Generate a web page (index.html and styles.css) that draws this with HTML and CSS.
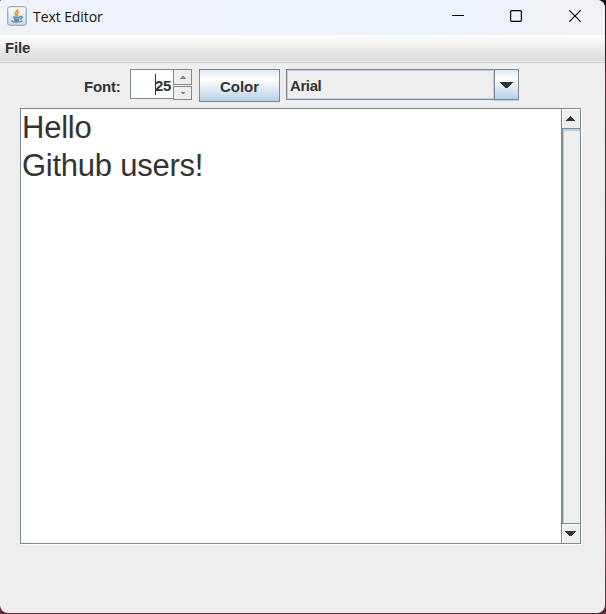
FILE: index.html
```html
<!DOCTYPE html>
<html lang="en">
<head>
<meta charset="utf-8">
<title>Text Editor</title>
<link rel="stylesheet" href="styles.css">
</head>
<body>
<div class="window">
  <header class="titlebar">
    <svg class="app-icon" width="20" height="20" viewBox="0 0 20 20" fill="none">
      <defs><linearGradient id="tile" x1="0" y1="0" x2="0" y2="1"><stop offset="0" stop-color="#fdfeff"/><stop offset="1" stop-color="#cfdbe5"/></linearGradient></defs>
      <rect x=".75" y=".75" width="18.5" height="18.5" rx="2" fill="url(#tile)" stroke="#8299ad"/>
      <path d="M10.8 3c.6 2-3.600 2.700-2.800 4.700.2.700 1 1.300 1.400 2.100M12.300 5.800c-2.400 1-2.800 1.800-1.800 2.800.4.500.2 1-.2 1.400" stroke="#ef8a35" stroke-width="1.500"/>
      <path d="M6 10.600c1.500.9 6 .8 7.500 0M6.800 12.400c1.800.8 4.300.7 5.800.1M7.200 14c1.500.6 3.600.6 5 0M13.300 10.500c2.700-.5 2.400 2-.3 2.800M5.500 14.600c-3 1.200 6 2.500 10 .1" stroke="#55809f" stroke-width="1.300"/>
    </svg>
    <span class="title">Text Editor</span>
    <div class="controls">
      <svg width="12" height="12" viewBox="0 0 12 12"><path d="M0 5.500h12" stroke="#000"/></svg>
      <svg width="12" height="12" viewBox="0 0 12 12"><rect x=".6" y=".6" width="10.800" height="10.800" rx="1.200" fill="none" stroke="#000" stroke-width="1.200"/></svg>
      <svg class="close" width="12" height="12" viewBox="0 0 12 12"><path d="M.3.3l11.400 11.400M11.700.3L.3 11.700" stroke="#000" stroke-width="1.100"/></svg>
    </div>
  </header>
  <nav class="menubar"><span>File</span></nav>
  <div class="toolbar">
    <span class="label">Font:</span>
    <div class="spinner">
      <div class="field"><span class="caret"></span>25</div>
      <div class="steps">
        <div class="step"><svg width="6" height="3" viewBox="0 0 6 3"><path d="M2 0h2v1h1v1h1v1H0V2h1V1h1z"/></svg></div>
        <div class="step"><svg width="4" height="2" viewBox="0 0 4 2"><path d="M0 0h4v1H3v1H1V1H0z"/></svg></div>
      </div>
    </div>
    <div class="button">Color</div>
    <div class="combo">
      <div class="value">Arial</div>
      <div class="drop"><svg width="13" height="6" viewBox="0 0 13 6"><path d="M0 0h13v1h-1v1h-1v1h-1v1H9v1H8v1H5V5H4V4H3V3H2V2H1V1H0z"/></svg></div>
    </div>
  </div>
  <main class="editor">
    <div class="text">Hello<br>Github users!</div>
    <div class="scrollbar">
      <div class="arrow up"><svg width="9" height="5" viewBox="0 0 9 5"><path d="M4 0h1v1h1v1h1v1h1v1h1v1H0V4h1V3h1V2h1V1h1z"/></svg></div>
      <div class="thumb"></div>
      <div class="arrow down"><svg width="11" height="5" viewBox="0 0 11 5"><path d="M0 0h11v1h-1v1H9v1H8v1H7v1H4V4H3V3H2V2H1V1H0z"/></svg></div>
    </div>
  </main>
</div>
</body>
</html>
```
FILE: styles.css
```css
* { box-sizing: border-box; }
svg { display: block; flex: none; }
body {
  margin: 0;
  width: 606px;
  height: 614px;
  overflow: hidden;
  background: linear-gradient(#111 0, #222 50px, #6d2431 80px, #34343e 110px, #292b35 500px, #a83d4a 540px, #5e2637 614px);
  font: bold 15px "Liberation Sans", Arial, sans-serif;
  letter-spacing: -0.2px;
  color: #333;
}
.window {
  width: 605px;
  height: 613px;
  overflow: hidden;
  border-radius: 2px 8px 8px 8px;
  background: #eee;
}
.titlebar {
  display: flex;
  align-items: center;
  height: 35px;
  padding: 0 24px 4px 7px;
  background: linear-gradient(90deg, #eff3f9, #ebf3fb 75%, #f3f1f6);
}
.title {
  margin-left: 6px;
  padding-top: 2px;
  font: 14px/20px "Open Sans", "Noto Sans", sans-serif;
  letter-spacing: -0.08px;
  color: #111;
}
.controls { display: flex; gap: 46px; margin-left: auto; }
.close { margin-left: 1px; }
.menubar {
  height: 28px;
  padding: 0 5px;
  border-bottom: 1px solid #ccc;
  background: linear-gradient(#fff, #dadada 26px, #eee 26px);
  line-height: 26px;
}
.toolbar { display: flex; align-items: flex-start; height: 45px; padding: 6px 0 0 84px; }
.label { width: 46px; line-height: 35px; }
.spinner { display: flex; width: 62px; height: 31px; margin-right: 7px; }
.field {
  display: flex;
  justify-content: flex-end;
  align-items: center;
  width: 43px;
  height: 30px;
  padding: 3px 2px 0 0;
  border: solid #7a8a99;
  border-width: 1px 0 1px 1px;
  background: #fff;
  letter-spacing: -0.4px;
}
.caret { width: 1px; height: 21px; margin: -3px -1px 0 0; background: #333; }
.steps { display: flex; flex-direction: column; gap: 1px; width: 19px; }
.step { display: grid; place-items: center; height: 16px; border: 1px solid #7a8a99; fill: #7a8a99; }
.step:last-child { height: 14px; }
.button {
  width: 81px;
  height: 33px;
  margin-right: 6px;
  border: 1px solid #7a8a99;
  background: linear-gradient(#dde8f3, #fff 30%, #b8cfe5);
  text-align: center;
  letter-spacing: 0;
  line-height: 34px;
}
.combo { display: flex; width: 233px; height: 31px; }
.value {
  flex: 1;
  padding-left: 3px;
  border: 1px solid #7a8a99;
  border-right: 0;
  box-shadow: inset 1px 1px #b8cfe5, inset -1px -1px #b8cfe5;
  letter-spacing: -0.4px;
  line-height: 31px;
}
.drop {
  display: grid;
  place-items: center;
  width: 25px;
  height: 31px;
  border: 1px solid #7a8a99;
  background: linear-gradient(#dde8f3, #fff 30%, #b8cfe5);
  box-shadow: 0 1px #b8cfe5;
  fill: #333;
}
.editor {
  display: flex;
  width: 561px;
  height: 436px;
  margin-left: 20px;
  border: 1px solid #7a8a99;
  background: #fff;
  box-shadow: 1px 1px #fff;
}
.text { flex: 1; padding: 0 1px; font-size: 31px; font-weight: normal; letter-spacing: -0.25px; line-height: 38px; }
.scrollbar { display: flex; flex-direction: column; width: 19px; border-left: 1px solid #7a8a99; background: #eee; }
.arrow { display: grid; place-items: center; height: 19px; padding-right: 2px; fill: #333; box-shadow: inset 1px 1px #fff; }
.thumb {
  flex: 1;
  border: solid #7a8a99;
  border-width: 1px 0 1px 1px;
  box-shadow: inset 1px 2px #b8cfe5;
}
```
